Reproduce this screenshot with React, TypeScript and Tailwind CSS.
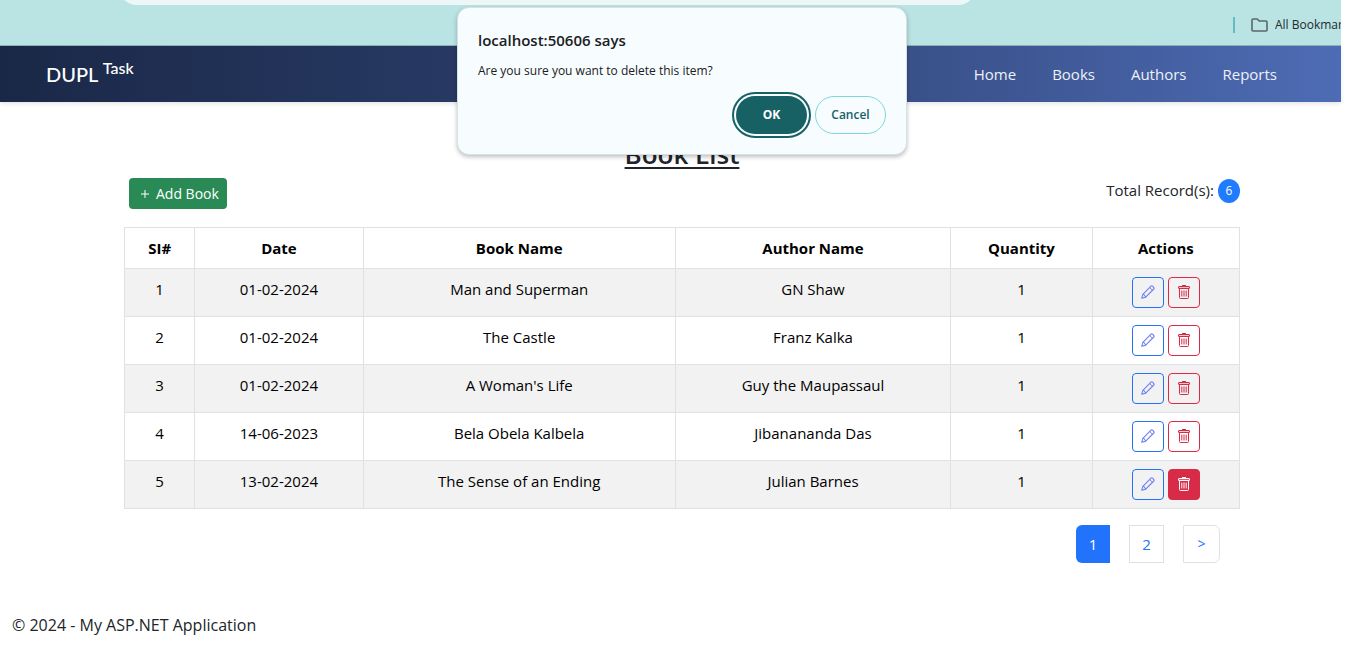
type Book = {
  id: number;
  date: string;
  name: string;
  author: string;
  quantity: number;
  deleting?: boolean;
};

const books: Book[] = [
  { id: 1, date: "01-02-2024", name: "Man and Superman", author: "GN Shaw", quantity: 1 },
  { id: 2, date: "01-02-2024", name: "The Castle", author: "Franz Kalka", quantity: 1 },
  { id: 3, date: "01-02-2024", name: "A Woman's Life", author: "Guy the Maupassaul", quantity: 1 },
  { id: 4, date: "14-06-2023", name: "Bela Obela Kalbela", author: "Jibanananda Das", quantity: 1 },
  { id: 5, date: "13-02-2024", name: "The Sense of an Ending", author: "Julian Barnes", quantity: 1, deleting: true },
];

const columns = [
  { label: "SI#", width: "w-[6.3%]" },
  { label: "Date", width: "w-[15.1%]" },
  { label: "Book Name", width: "w-[28%]" },
  { label: "Author Name", width: "w-[24.7%]" },
  { label: "Quantity", width: "w-[12.7%]" },
  { label: "Actions", width: "w-[13.2%]" },
];

const links = ["Home", "Books", "Authors", "Reports"];

function PencilIcon() {
  return (
    <svg className="size-[14px]" viewBox="0 0 14 14" fill="none" stroke="currentColor" strokeLinejoin="round" aria-hidden="true">
      <path d="M.7 13.3l1.2-4L10 1.2a1.1 1.1 0 0 1 1.5 0l1.3 1.3a1.1 1.1 0 0 1 0 1.5l-8.1 8.1z" strokeWidth="1.1" />
      <path d="M8.7 2.5l2.8 2.8M1.9 9.3l1.4.3.2 1.1 1 .3.2 1.1" strokeWidth="1" />
    </svg>
  );
}

function TrashIcon() {
  return (
    <svg className="h-[14px] w-3" viewBox="0 0 12 14" fill="none" stroke="currentColor" aria-hidden="true">
      <path d="M4 .5h4" />
      <rect x=".5" y="1.5" width="11" height="2" rx=".5" fill="currentColor" fillOpacity=".25" />
      <path d="M1.5 3.5v9a1 1 0 0 0 1 1h7a1 1 0 0 0 1-1v-9" />
      <path d="M3.8 5.5v6M6 5.5v6M8.2 5.5v6" />
    </svg>
  );
}

function BrowserBar() {
  return (
    <div className="relative flex h-[46px] items-center justify-end overflow-hidden border-b border-[#8db0b5] bg-[#bae3e4]">
      <div className="absolute -top-7 left-[120px] h-[33px] w-[855px] rounded-full bg-[#edf7f8]" />
      <div className="mt-1 flex items-center">
        <span className="h-4 w-[2px] bg-[#62bcc2]" />
        <svg className="ml-4 h-[14px] w-[17px]" viewBox="0 0 17 14" fill="none" stroke="#5d6668" strokeWidth="1.6" aria-hidden="true">
          <path d="M1 2a1 1 0 0 1 1-1h4.2l2 2H15a1 1 0 0 1 1 1v8a1 1 0 0 1-1 1H2a1 1 0 0 1-1-1z" />
        </svg>
        <span className="ml-[7px] w-[66px] overflow-hidden text-xs whitespace-nowrap text-[#1f2a2c]">All Bookmarks</span>
      </div>
    </div>
  );
}

function NavBar() {
  return (
    <nav className="flex h-14 items-center justify-between bg-linear-to-r from-[#1a2847] via-[#2e4272] to-[#4e6cb5] pr-16 pl-[46px] shadow-[0_2px_4px_rgba(0,0,0,0.1)]">
      <a href="#" className="font-['Lato',sans-serif] text-xl font-medium text-white">
        DUPL <sup className="-top-2 text-base">Task</sup>
      </a>
      <ul className="flex gap-9">
        {links.map((link) => (
          <li key={link}>
            <a href="#" className="text-[15px] font-medium text-[#eef1f8]">
              {link}
            </a>
          </li>
        ))}
      </ul>
    </nav>
  );
}

function ConfirmDialog() {
  return (
    <div
      role="alertdialog"
      aria-labelledby="dialog-title"
      aria-describedby="dialog-text"
      className="absolute top-[7px] left-1/2 w-[450px] -translate-x-1/2 rounded-xl border border-[#d5e1e2] bg-[#f7fcff] px-5 pt-[22px] pb-4 shadow-[0_2px_4px_rgba(0,0,0,0.25)]"
    >
      <h2 id="dialog-title" className="text-[15px] leading-5 font-semibold text-[#1a2022]">
        localhost:50606 says
      </h2>
      <p id="dialog-text" className="mt-[11px] text-xs leading-5 text-[#1a2022]">
        Are you sure you want to delete this item?
      </p>
      <div className="mt-[11px] flex items-center justify-end">
        <button
          type="button"
          className="m-1 h-[38px] w-[71px] rounded-full bg-[#176165] text-xs font-bold text-white outline-2 outline-offset-2 outline-[#176165]"
        >
          OK
        </button>
        <button type="button" className="ml-1 h-[38px] w-[71px] rounded-full border border-[#7ed7de] text-xs font-semibold text-[#176165]">
          Cancel
        </button>
      </div>
    </div>
  );
}

function BookTable() {
  return (
    <table className="mt-[18px] w-full table-fixed border-collapse text-center text-base text-black">
      <thead>
        <tr className="h-[41px]">
          {columns.map((column) => (
            <th key={column.label} scope="col" className={`border border-[#dee2e6] p-2 text-[15px] leading-6 font-bold ${column.width}`}>
              {column.label}
            </th>
          ))}
        </tr>
      </thead>
      <tbody className="text-[15px] leading-6">
        {books.map((book) => (
          <tr key={book.id} className="h-12 align-top odd:bg-[#f2f2f2]">
            <td className="border border-[#dee2e6] p-2">{book.id}</td>
            <td className="border border-[#dee2e6] p-2">{book.date}</td>
            <td className="border border-[#dee2e6] p-2">{book.name}</td>
            <td className="border border-[#dee2e6] p-2">{book.author}</td>
            <td className="border border-[#dee2e6] p-2">{book.quantity}</td>
            <td className="border border-[#dee2e6] p-2">
              <div className="flex justify-center gap-1">
                <button
                  type="button"
                  aria-label={`Edit ${book.name}`}
                  className="flex h-[31px] w-8 items-start justify-center rounded border border-[#2273fb] pt-[7px] text-[#6f7ef5]"
                >
                  <PencilIcon />
                </button>
                <button
                  type="button"
                  aria-label={`Delete ${book.name}`}
                  className={`flex h-[31px] w-8 items-start justify-center rounded border border-[#d72b47] pt-[7px] ${
                    book.deleting ? "bg-[#d72b47] text-white" : "text-[#d72b47]"
                  }`}
                >
                  <TrashIcon />
                </button>
              </div>
            </td>
          </tr>
        ))}
      </tbody>
    </table>
  );
}

export default function App() {
  return (
    <div className="relative min-h-screen bg-white font-['Open_Sans','Noto_Sans',sans-serif] text-[#212529]">
      <header className="mr-[23px]">
        <BrowserBar />
        <NavBar />
      </header>

      <main className="mx-auto max-w-[1140px] px-3 pt-9">
        <h1 className="text-center text-[26px] leading-8 font-semibold underline decoration-2 underline-offset-3">Book List</h1>
        <div className="mt-2 flex justify-between pl-[5px]">
          <button type="button" className="flex h-[31px] items-center rounded bg-[#2a8a56] pr-2 pl-3 text-sm text-white">
            <svg className="mr-[7px] size-2" viewBox="0 0 8 8" stroke="currentColor" aria-hidden="true">
              <path d="M4 0v8M0 4h8" />
            </svg>
            Add Book
          </button>
          <p className="flex h-[25px] items-center gap-1 text-[15px]">
            Total Record(s):
            <span className="flex h-6 w-[22px] items-center justify-center rounded-[50%] bg-[#1f7cff] text-xs text-white">6</span>
          </p>
        </div>

        <BookTable />

        <nav aria-label="Pages" className="mt-4 flex justify-end gap-[19px] pr-5 text-[15px] text-[#2273fb]">
          <a href="#" aria-current="page" className="flex h-[38px] w-[34px] items-center justify-center rounded-l-md bg-[#2273fb] text-white">
            1
          </a>
          <a href="#" className="flex h-[38px] w-[35px] items-center justify-center border border-[#dee2e6]">
            2
          </a>
          <a href="#" aria-label="Next page" className="flex h-[38px] w-[37px] items-center justify-center rounded-r-md border border-[#dee2e6] text-sm">
            &gt;
          </a>
        </nav>
      </main>

      <footer className="mt-[50px] px-3 text-base leading-6">© 2024 - My ASP.NET Application</footer>

      <ConfirmDialog />
    </div>
  );
}
